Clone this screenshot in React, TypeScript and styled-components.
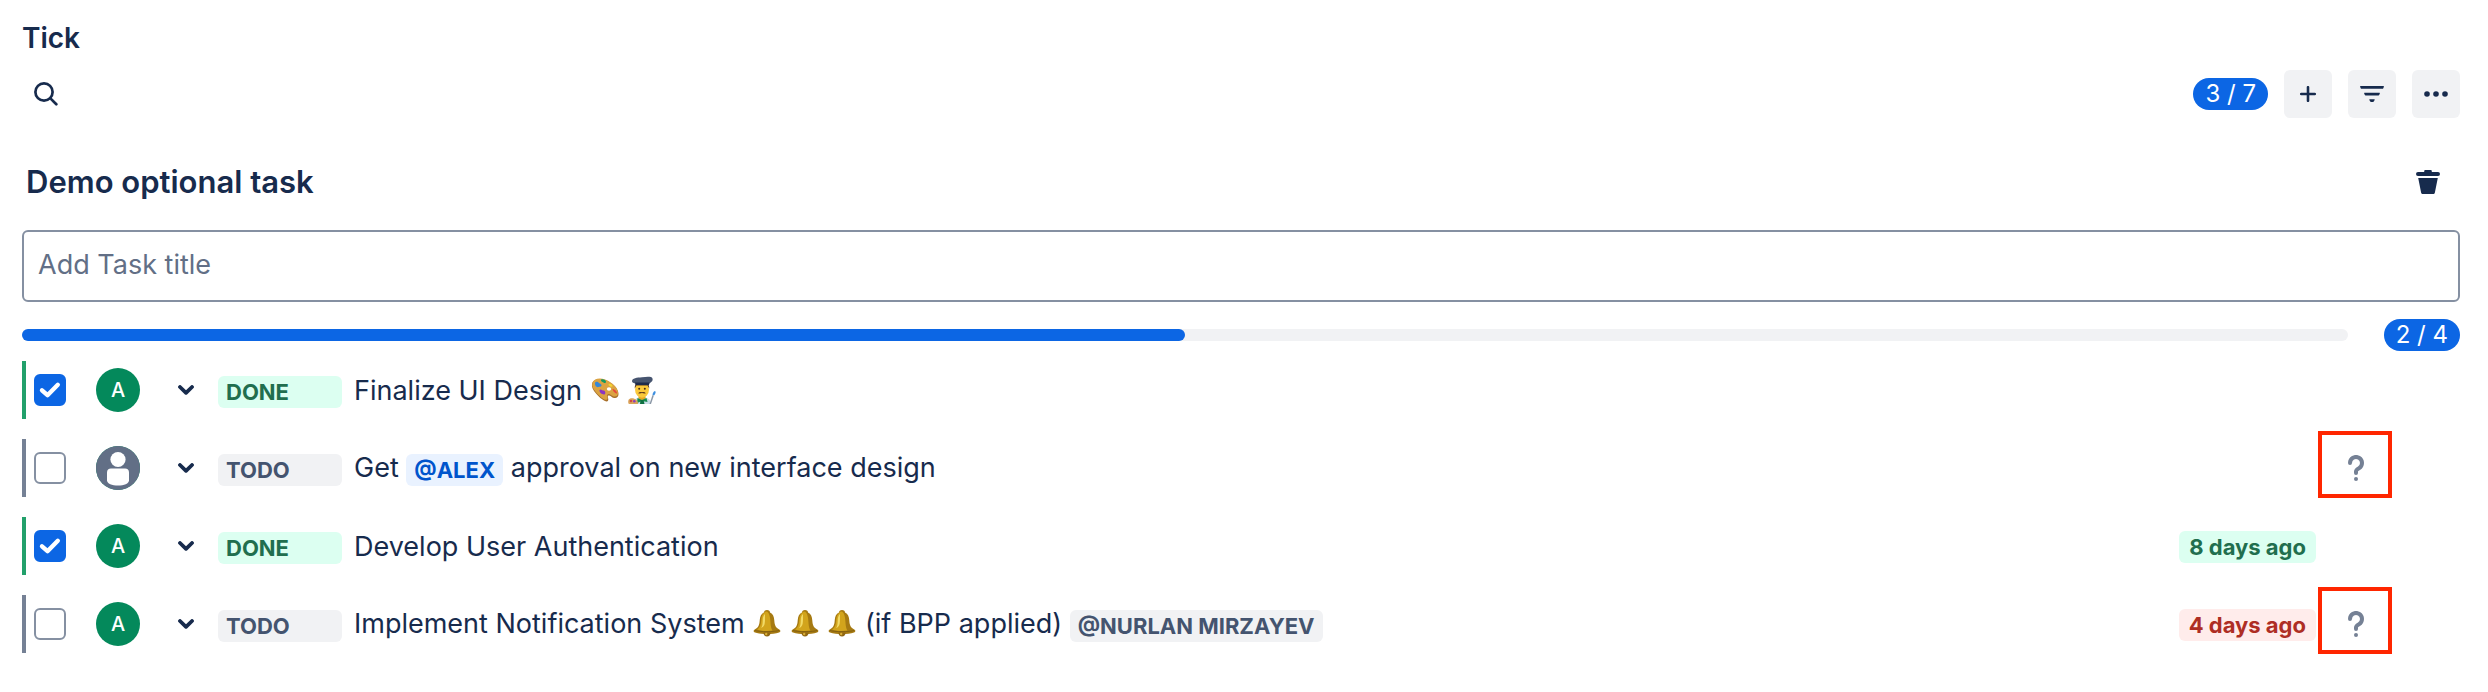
import React, { useState } from "react";
import styled, { createGlobalStyle } from "styled-components";

const color = {
  ink: "#172B4D",
  muted: "#626F86",
  outline: "#8590A2",
  slate: "#758195",
  neutral: "#F1F2F4",
  blue: "#0C66E4",
  green: "#22A06B",
  red: "#FF2600",
};

type Tone = "success" | "neutral" | "info" | "danger";

const tones: Record<Tone, { bg: string; fg: string }> = {
  success: { bg: "#DCFFF1", fg: "#216E4E" },
  neutral: { bg: "#F1F2F4", fg: "#44546F" },
  info: { bg: "#E9F2FF", fg: "#0055CC" },
  danger: { bg: "#FFECEB", fg: "#AE2E24" },
};

const GlobalStyle = createGlobalStyle`
  *, *::before, *::after { box-sizing: border-box; }
  body {
    margin: 0;
    background: #fff;
    color: ${color.ink};
    font-family: Inter, "Liberation Sans", sans-serif;
    font-size: 27px;
    line-height: 32px;
  }
  button, input { font: inherit; color: inherit; }
  svg { display: block; }
`;

const Page = styled.main`
  padding: 22px 28px 32px 22px;
`;

const Title = styled.h1`
  margin: 0;
  font-size: 28px;
  line-height: 32px;
  font-weight: 600;
`;

const Toolbar = styled.div`
  display: flex;
  align-items: center;
  gap: 16px;
  margin-top: 16px;
`;

const Spacer = styled.div`
  flex: 1;
`;

const IconButton = styled.button<{ $filled?: boolean }>`
  display: grid;
  place-items: center;
  width: 48px;
  height: 48px;
  padding: 0;
  border: 0;
  border-radius: 6px;
  background: ${(p) => (p.$filled ? color.neutral : "transparent")};
  cursor: pointer;
`;

const Counter = styled.span`
  flex: none;
  height: 32px;
  padding: 0 12px;
  border-radius: 16px;
  background: ${color.blue};
  color: #fff;
  font-size: 24px;
  white-space: nowrap;
`;

const SectionHeader = styled.header`
  display: flex;
  align-items: center;
  justify-content: space-between;
  margin-top: 40px;
  padding: 0 8px 0 4px;
`;

const SectionTitle = styled.h2`
  margin: 0;
  font-size: 31px;
  line-height: 48px;
  font-weight: 600;
`;

const TaskInput = styled.input`
  display: block;
  width: 100%;
  height: 72px;
  margin-top: 24px;
  padding: 0 14px 4px;
  border: 2px solid ${color.outline};
  border-radius: 6px;
  background: #fff;
  outline: none;
  &::placeholder { color: ${color.muted}; opacity: 1; }
`;

const ProgressRow = styled.div`
  display: flex;
  align-items: center;
  gap: 36px;
  margin: 17px 0 10px;
`;

const Track = styled.div`
  flex: 1;
  height: 12px;
  border-radius: 6px;
  background: ${color.neutral};
`;

const Fill = styled.div`
  height: 12px;
  border-radius: 6px;
  background: ${color.blue};
`;

const TaskList = styled.ul`
  display: flex;
  flex-direction: column;
  gap: 20px;
  margin: 0;
  padding: 0;
  list-style: none;
`;

const TaskRow = styled.li<{ $done: boolean }>`
  position: relative;
  display: flex;
  align-items: center;
  min-height: 58px;
  padding-left: 8px;
  border-left: 4px solid ${(p) => (p.$done ? color.green : color.slate)};
`;

const CheckCell = styled.label`
  display: grid;
  flex: none;
  width: 32px;
  height: 32px;
  cursor: pointer;
  & > * { grid-area: 1 / 1; }
  & > svg { pointer-events: none; }
`;

const Checkbox = styled.input`
  appearance: none;
  width: 32px;
  height: 32px;
  margin: 0;
  border: 2px solid ${color.outline};
  border-radius: 6px;
  background: #fff;
  &:checked {
    border-color: ${color.blue};
    background: ${color.blue};
  }
`;

const Avatar = styled.span`
  display: grid;
  place-items: center;
  flex: none;
  width: 44px;
  height: 44px;
  margin: 0 30px;
  border-radius: 50%;
  background: #04895B;
  color: #fff;
  font-size: 20px;
  font-weight: 500;
`;

const ExpandButton = styled(IconButton)`
  width: 32px;
  height: 32px;
`;

const Lozenge = styled.span<{ $tone: Tone }>`
  display: inline-block;
  flex: none;
  height: 32px;
  padding: 0 8px;
  border-radius: 6px;
  background: ${(p) => tones[p.$tone].bg};
  color: ${(p) => tones[p.$tone].fg};
  font-size: 22px;
  font-weight: 700;
  line-height: 32px;
  white-space: nowrap;
  vertical-align: middle;
`;

const Status = styled(Lozenge)`
  width: 124px;
  margin: 4px 12px 0 16px;
`;

const TaskText = styled.span`
  flex: 1;
  min-width: 0;
  padding-top: 2px;
`;

const DueDate = styled(Lozenge)`
  margin-top: 2px;
  padding: 0 10px;
`;

const RowEnd = styled.div`
  display: flex;
  justify-content: center;
  flex: none;
  width: 144px;
  padding-right: 64px;
`;

const Highlight = styled.span`
  position: absolute;
  top: -8px;
  right: 68px;
  width: 74px;
  height: 67px;
  border: 4px solid ${color.red};
  pointer-events: none;
`;

const EmojiSvg = styled.svg`
  display: inline-block;
  width: 28px;
  height: 28px;
  margin: 0 1px;
  vertical-align: -4px;
`;

const SearchIcon = () => (
  <svg width="24" height="24" viewBox="0 0 24 24" fill="none" stroke={color.ink} strokeWidth="2.7" strokeLinecap="round">
    <circle cx="10" cy="10" r="8.6" />
    <path d="M16.4 16.4 22.3 22.3" />
  </svg>
);

const PlusIcon = () => (
  <svg width="16" height="16" viewBox="0 0 16 16" stroke={color.ink} strokeWidth="2.6" strokeLinecap="round">
    <path d="M8 1.2v13.6M1.2 8h13.6" />
  </svg>
);

const FilterIcon = () => (
  <svg width="24" height="16" viewBox="0 0 24 16" fill={color.ink}>
    <path d="M.8 0h22.4c.6 0 .8.5.6 1l-.5 1.2c-.2.4-.5.6-.9.6H1.6c-.4 0-.7-.2-.9-.6L.2 1C0 .5.2 0 .8 0Z" />
    <path d="M4.7 6.7h14.6c.5 0 .7.4.5.8l-.5 1.3c-.2.4-.5.6-.9.6H5.6c-.4 0-.7-.2-.9-.6L4.2 7.500c-.2-.4 0-.8.5-.8Z" />
    <path d="M9.900 13.200h4.200c.5 0 .7.5.5.9l-.8 1.400c-.2.3-.5.5-.9.5h-1.800c-.4 0-.7-.2-.9-.5l-.8-1.400c-.2-.4 0-.9.5-.9Z" />
  </svg>
);

const MoreIcon = () => (
  <svg width="24" height="6" viewBox="0 0 24 6" fill={color.ink}>
    <circle cx="3" cy="3" r="2.8" />
    <circle cx="12" cy="3" r="2.8" />
    <circle cx="21" cy="3" r="2.8" />
  </svg>
);

const TrashIcon = () => (
  <svg width="24" height="24" viewBox="0 0 24 24" fill={color.ink}>
    <path d="M8.200 2V1.200C8.200.5 8.700 0 9.400 0h5.200c.7 0 1.200.5 1.200 1.200V2H22a2 2 0 0 1 0 4H2a2 2 0 0 1 0-4Z" />
    <path d="M2.200 8h19.600l-2.900 14.400c-.2 1-.9 1.600-1.900 1.600H7c-1 0-1.700-.6-1.900-1.600Z" />
  </svg>
);

const CheckIcon = () => (
  <svg width="32" height="32" viewBox="0 0 32 32" fill="none" stroke="#fff" strokeWidth="4.4" strokeLinecap="round" strokeLinejoin="round">
    <path d="M8 16.300 13.500 21.200 23.800 10.800" />
  </svg>
);

const ChevronIcon = () => (
  <svg width="16" height="10" viewBox="0 0 16 10" fill="none" stroke={color.ink} strokeWidth="3.8" strokeLinecap="round" strokeLinejoin="round">
    <path d="M2 2 8 7.800 14 2" />
  </svg>
);

const HelpIcon = () => (
  <svg width="16" height="26" viewBox="0 0 16 26" fill="none" stroke={color.slate} strokeWidth="4" strokeLinecap="round">
    <path d="M2 8a6 6 0 1 1 9 5.200C9 14.300 8 14.700 8 16.500V18" />
    <circle cx="8" cy="24" r="2" fill={color.slate} stroke="none" />
  </svg>
);

const PersonIcon = () => (
  <svg width="44" height="44" viewBox="0 0 44 44">
    <circle cx="22" cy="22" r="22" fill={color.muted} />
    <circle cx="22" cy="13.500" r="7.600" fill="#fff" />
    <path d="M11 26.500c0-2.600 1.500-4 4-4h14c2.500 0 4 1.400 4 4v8c0 3-5 5-11 5s-11-2-11-5Z" fill="#fff" />
  </svg>
);

const Palette = () => (
  <EmojiSvg viewBox="0 0 28 28" role="img" aria-label="palette">
    <path d="M1 8C2 3 8 1.800 14 4c7 2.500 13.500 8 13.500 14 0 3-2 4.600-4.500 4-2.500-.5-3.800-3-5.500-2.500-1.800.5.7 3.500-.5 5.300C15.500 27 9.500 23 5 17.500 2 14 .4 11 1 8Z" fill="#A8702A" />
    <path d="M1.300 7.500C2.500 2.800 8 1.500 14 3.500c7 2.500 13 8 13 13.500 0 3-2 4-4.300 3.400-2.500-.6-3.800-2.800-5.700-2.200-1.900.6.5 3.500-.8 5C14.800 25.300 9.500 21.500 5.200 16.500 2.300 13 .7 10.500 1.300 7.500Z" fill="#DBA342" />
    <ellipse cx="18" cy="13" rx="2.200" ry="1.800" fill="#fff" />
    <path d="M4 7c1-2 3-1 4 0s3 1 2.500 2.800c-.5 1.500-2 .6-3 1.200-1.500.8-4-1.500-3.500-4Z" fill="#3487D8" />
    <path d="M10 3.700c1.500-1 4.500 0 5 1.800.3 1.500-1.500 2-2.500 1-1-.8-3-1.300-2.500-2.800Z" fill="#149A62" />
    <path d="M17.500 8c1.500-1 4 .5 4 2.300-.5 1.200-4 .2-4-2.300Z" fill="#F4D631" />
    <path d="M21.500 13c2 0 4.800 2.500 4.500 4.500-1.500.4-4.500-2.500-4.500-4.500Z" fill="#E64A3C" />
    <path d="M8.500 14c1.500-1.500 2.500.5 4 .5s2.500 2.500 1.300 3.700c-1.500 1-5.800-1.200-5.300-4.200Z" fill="#8C35C2" />
  </EmojiSvg>
);

const Artist = () => (
  <EmojiSvg viewBox="0 0 28 28" role="img" aria-label="artist">
    <path d="M5 28c.5-5 4-7 9-7s8.500 2 9 7Z" fill="#C9DDE8" />
    <path d="M10.500 19h7v3.500L14 26l-3.500-3.500Z" fill="#E6A723" />
    <path d="M9.500 22 14 24l4.500-2 1 4-5.500-1-5 2Z" fill="#168D50" />
    <path d="m12.500 24 3 0 1 4h-4.500Z" fill="#0D7040" />
    <ellipse cx="14" cy="13.500" rx="7" ry="8.300" fill="#FBC93B" />
    <path d="M6.800 12.500C6.500 8 9 6 14 6s7.500 2 7.200 6.500L19.500 9.500h-11Z" fill="#5A3A22" />
    <path d="M4 5.300C4 2 9 1.500 14 1.200c5-.4 9.500-1 10.500 1.300.8 2-1 3.500-3 5H7C5.500 7 4 6.700 4 5.300Z" fill="#46546F" />
    <path d="M7 6.500h14.500L21 9H7.500Z" fill="#1E2A4A" />
    <circle cx="11.200" cy="12.800" r="1" fill="#4A2C17" />
    <circle cx="16.800" cy="12.800" r="1" fill="#4A2C17" />
    <path d="M10.200 17.300c1-1.500 2.600-1.700 3.800-1 1.200-.7 2.800-.5 3.800 1-1.200.4-2.600.3-3.800-.2-1.200.5-2.600.6-3.800.2Z" fill="#603A1C" />
    <path d="M.5 24c1-2.500 5.500-2.500 8 0 1.500 1.500 1.500 3 1.500 4H.8C0 26.800 0 25.300.5 24Z" fill="#D9A45B" />
    <circle cx="3" cy="25" r="1.300" fill="#D4473E" />
    <circle cx="6.300" cy="25.300" r="1.300" fill="#8B3CC0" />
    <path d="M27 15c1.200 1 .5 3-1 4.500L24.500 19c.2-2 1-3.500 2.500-4Z" fill="#3C8FE0" />
    <path d="m24.500 19 1.300.7L23 28h-1.500Z" fill="#8B97A6" />
  </EmojiSvg>
);

const Bell = () => (
  <EmojiSvg viewBox="0 0 28 28" role="img" aria-label="bell">
    <path d="M14 1c2 0 3 1 3 2.500 3 1.200 4 4 4.300 8 .3 5 1.500 7.200 5 9 1.500.8 1.500 2.500-.3 3C23 24.500 18 25 14 25s-9-.5-12-1.500c-1.800-.5-1.800-2.200-.3-3 3.500-1.800 4.700-4 5-9 .3-4 1.300-6.800 4.300-8C11 2 12 1 14 1Z" fill="#A67A12" />
    <path d="M13 2.500c-3 1.500-4.500 4-4.800 9-.3 4.500-1.300 7-4.200 9 3 1.200 7 1.500 10 1.500 2 0 4-.1 5.500-.4C17 18 18 12 16.500 6.500 16 4.500 15 2.500 13 2.500Z" fill="#D2A41C" />
    <path d="M12 5c-1.800 1.500-2.300 4-2.300 7s-.4 5-1.500 7c1.600-.6 3-2 3.500-4.500.5-2.800.3-6 .3-9.500Z" fill="#F2DA66" />
    <path d="M2 21.500c4 1.500 20 1.500 24 0" stroke="#84600F" strokeWidth="1" fill="none" />
    <path d="M10.500 23.500h7c0 2.400-1.400 4-3.500 4s-3.500-1.600-3.500-4Z" fill="#8F6612" />
    <circle cx="13.200" cy="25" r="1.200" fill="#D9AE35" />
  </EmojiSvg>
);

interface Task {
  id: string;
  label: string;
  done: boolean;
  assignee?: string;
  content: React.ReactNode;
  due?: { text: string; tone: Tone };
  optional?: boolean;
}

const initialTasks: Task[] = [
  {
    id: "design",
    label: "Finalize UI Design",
    done: true,
    assignee: "A",
    content: <>Finalize UI Design <Palette /> <Artist /></>,
  },
  {
    id: "approval",
    label: "Get approval on new interface design",
    done: false,
    content: <>Get <Lozenge $tone="info">@ALEX</Lozenge> approval on new interface design</>,
    optional: true,
  },
  {
    id: "auth",
    label: "Develop User Authentication",
    done: true,
    assignee: "A",
    content: "Develop User Authentication",
    due: { text: "8 days ago", tone: "success" },
  },
  {
    id: "notify",
    label: "Implement Notification System",
    done: false,
    assignee: "A",
    content: (
      <>
        Implement Notification System <Bell /> <Bell /> <Bell /> (if BPP applied){" "}
        <Lozenge $tone="neutral">@NURLAN MIRZAYEV</Lozenge>
      </>
    ),
    due: { text: "4 days ago", tone: "danger" },
    optional: true,
  },
];

export default function App() {
  const [tasks, setTasks] = useState(initialTasks);
  const done = tasks.filter((t) => t.done).length;
  const toggle = (id: string) =>
    setTasks((list) => list.map((t) => (t.id === id ? { ...t, done: !t.done } : t)));

  return (
    <>
      <GlobalStyle />
      <Page>
        <Title>Tick</Title>
        <Toolbar>
          <IconButton aria-label="Search"><SearchIcon /></IconButton>
          <Spacer />
          <Counter>3 / 7</Counter>
          <IconButton $filled aria-label="Add"><PlusIcon /></IconButton>
          <IconButton $filled aria-label="Filter"><FilterIcon /></IconButton>
          <IconButton $filled aria-label="More"><MoreIcon /></IconButton>
        </Toolbar>
        <SectionHeader>
          <SectionTitle>Demo optional task</SectionTitle>
          <IconButton aria-label="Delete checklist"><TrashIcon /></IconButton>
        </SectionHeader>
        <TaskInput type="text" placeholder="Add Task title" aria-label="Add Task title" />
        <ProgressRow>
          <Track role="progressbar" aria-label="Progress" aria-valuemin={0} aria-valuemax={tasks.length} aria-valuenow={done}>
            <Fill style={{ width: `${(done / tasks.length) * 100}%` }} />
          </Track>
          <Counter>{`${done} / ${tasks.length}`}</Counter>
        </ProgressRow>
        <TaskList>
          {tasks.map((task) => (
            <TaskRow key={task.id} $done={task.done}>
              <CheckCell>
                <Checkbox type="checkbox" aria-label={task.label} checked={task.done} onChange={() => toggle(task.id)} />
                {task.done && <CheckIcon />}
              </CheckCell>
              <Avatar>{task.assignee ?? <PersonIcon />}</Avatar>
              <ExpandButton aria-label="Change status"><ChevronIcon /></ExpandButton>
              <Status $tone={task.done ? "success" : "neutral"}>{task.done ? "DONE" : "TODO"}</Status>
              <TaskText>{task.content}</TaskText>
              {task.due && <DueDate $tone={task.due.tone}>{task.due.text}</DueDate>}
              <RowEnd>{task.optional && <HelpIcon />}</RowEnd>
              {task.optional && <Highlight />}
            </TaskRow>
          ))}
        </TaskList>
      </Page>
    </>
  );
}
